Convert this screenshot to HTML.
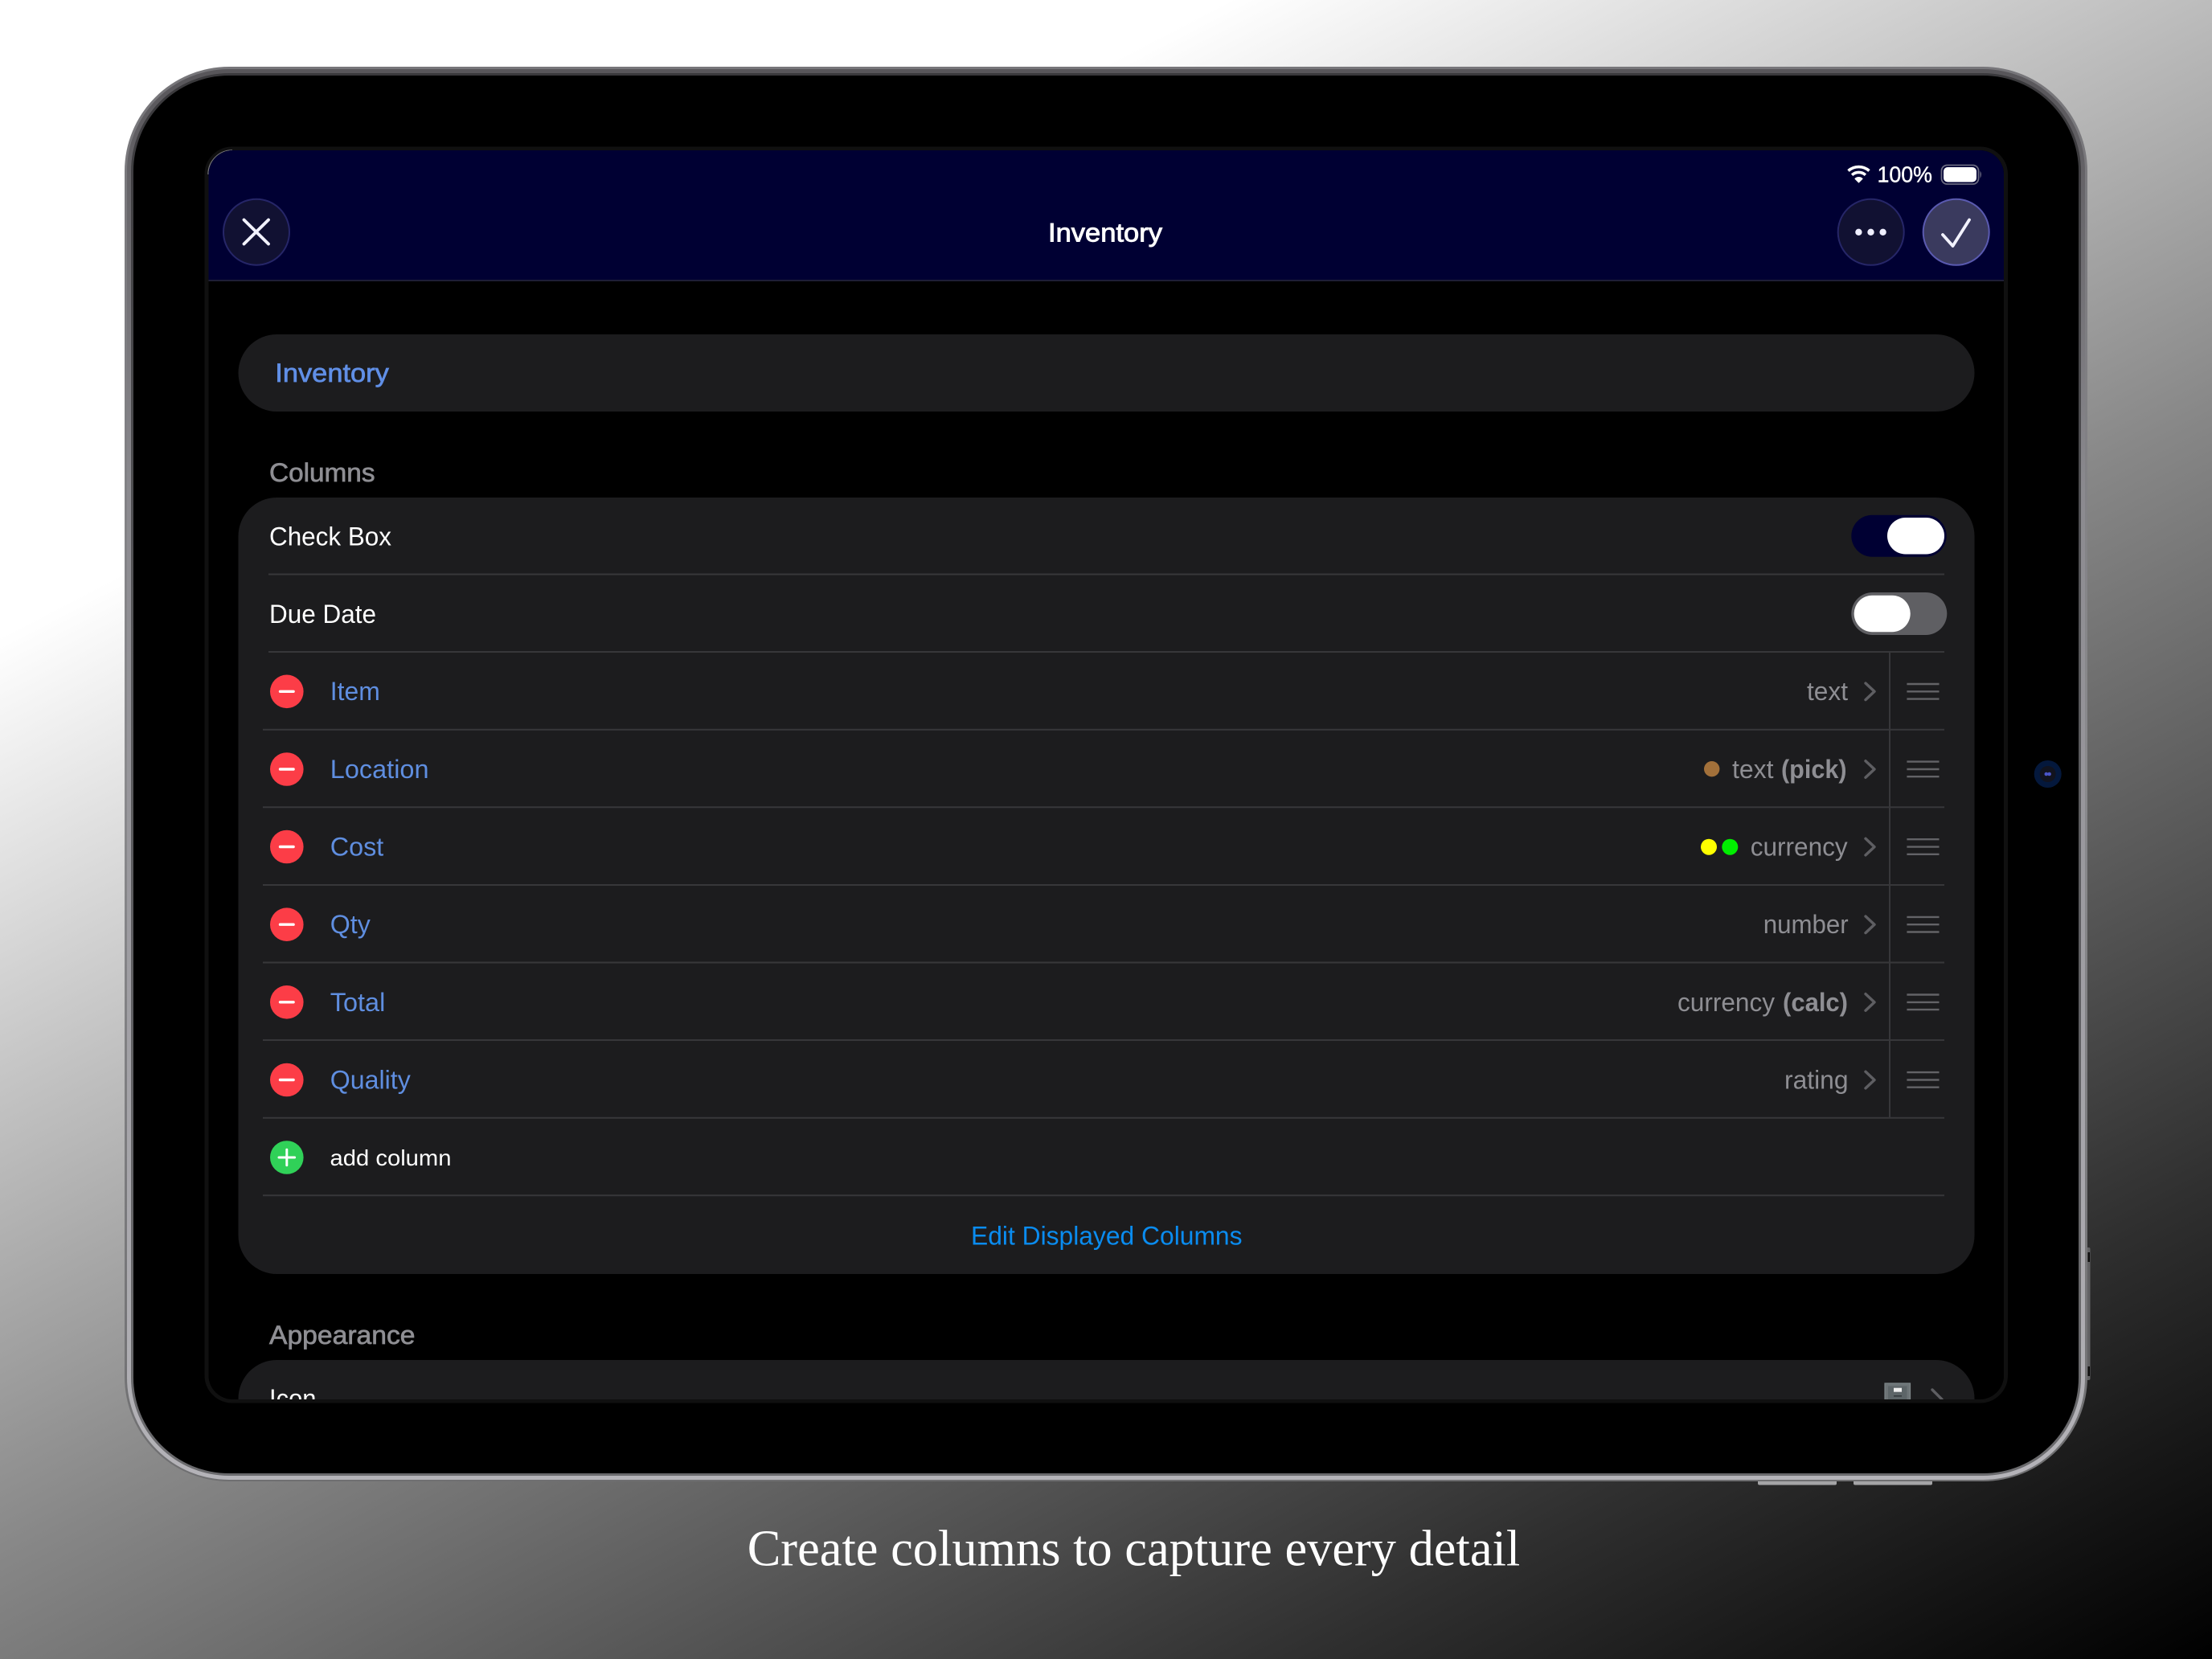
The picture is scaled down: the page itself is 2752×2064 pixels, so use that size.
<!DOCTYPE html>
<html lang="en">
<head>
<meta charset="utf-8">
<title>Inventory</title>
<style>
html,body{margin:0;padding:0;background:#000;width:2752px;height:2064px;overflow:hidden}
svg{display:block}
text{font-family:"Liberation Sans",sans-serif;font-size:32px;white-space:pre}
.w{fill:#fff}
.b{fill:#608fe6}
.g{fill:#8e8e93}
.m{stroke-width:.7px}
.bl{fill:#5f8ee0}
.sep{stroke:#37373a;stroke-width:2}
.chev{fill:none;stroke:#5e5e62;stroke-width:3.4;stroke-linecap:round;stroke-linejoin:round}
.hnd{stroke:#636367;stroke-width:2.4}
</style>
</head>
<body>
<svg width="2752" height="2064" viewBox="0 0 2752 2064" xmlns="http://www.w3.org/2000/svg">
<defs>
<linearGradient id="bg" gradientUnits="userSpaceOnUse" x1="323" y1="625" x2="1423" y2="2749">
<stop offset="0" stop-color="#ffffff"/>
<stop offset=".229" stop-color="#bebebe"/>
<stop offset=".425" stop-color="#878787"/>
<stop offset=".784" stop-color="#2f2f2f"/>
<stop offset="1" stop-color="#000000"/>
</linearGradient>
<linearGradient id="f1" x1="0" y1="0" x2="0" y2="1">
<stop offset="0" stop-color="#77767a"/>
<stop offset=".5" stop-color="#8a8a8d"/>
<stop offset="1" stop-color="#6f6f71"/>
</linearGradient>
<linearGradient id="f2" x1="0" y1="0" x2="0" y2="1">
<stop offset="0" stop-color="#58565a"/>
<stop offset=".3" stop-color="#8b8a8f"/>
<stop offset="1" stop-color="#b4b3b8"/>
</linearGradient>
<linearGradient id="f3" x1="0" y1="0" x2="0" y2="1">
<stop offset="0" stop-color="#3a393c"/>
<stop offset=".4" stop-color="#555558"/>
<stop offset="1" stop-color="#6a6a6d"/>
</linearGradient>
<clipPath id="scr"><rect x="259.5" y="187" width="2233.5" height="1554" rx="30"/></clipPath>
</defs>

<rect width="2752" height="2064" fill="url(#bg)"/>

<!-- side / bottom buttons -->
<rect x="2592" y="1552" width="8.5" height="165" rx="2" fill="#626264"/>
<rect x="2597.5" y="1558" width="2.5" height="12" fill="#0d0d0d"/>
<rect x="2597.5" y="1700" width="2.5" height="12" fill="#0d0d0d"/>
<rect x="2187" y="1840" width="98" height="7.5" rx="2" fill="#a4a4a6"/>
<rect x="2306" y="1840" width="98" height="7.5" rx="2" fill="#a4a4a6"/>

<!-- device frame -->
<rect x="155" y="83" width="2442" height="1760" rx="130" fill="url(#f1)"/>
<rect x="158" y="86" width="2436" height="1755" rx="127" fill="url(#f2)"/>
<rect x="163" y="91" width="2426" height="1745" rx="122" fill="url(#f3)"/>
<rect x="166" y="94" width="2420" height="1739" rx="119" fill="#000"/>

<!-- camera -->
<circle cx="2547.7" cy="963" r="17" fill="#04183c"/>
<circle cx="2547.7" cy="963" r="10" fill="#11131f"/>
<circle cx="2545.8" cy="963" r="2.3" fill="#4a55c8"/>
<circle cx="2549.6" cy="963" r="2.3" fill="#4a55c8"/>

<!-- screen border -->
<rect x="257" y="185" width="2238.5" height="1558" rx="32" fill="#000" stroke="#101010" stroke-width="5"/>
<path d="M259 217A30 30 0 0 1 289 187" fill="none" stroke="#77777a" stroke-width="1.4"/>

<g clip-path="url(#scr)">
<rect x="259" y="187" width="2235" height="1554" fill="#000"/>
<!-- nav -->
<rect x="259" y="187" width="2235" height="162" fill="#000033"/>
<rect x="259" y="348" width="2235" height="2" fill="#1e1e36"/>

<!-- status -->
<path d="M2312.5 227L2307.9 222.4A6.5 6.5 0 0 1 2317.1 222.4Z" fill="#fff" stroke="#fff" stroke-width="1" stroke-linejoin="round"/>
<path d="M2304.1 217.7A12.5 12.5 0 0 1 2320.9 217.7" fill="none" stroke="#fff" stroke-width="3.6"/>
<path d="M2299.5 212.5A19.5 19.5 0 0 1 2325.5 212.5" fill="none" stroke="#fff" stroke-width="3.6"/>
<text x="2335.5" y="226.5" class="w" style="font-size:28px;stroke:#fff;stroke-width:.4px" textLength="68.5" lengthAdjust="spacingAndGlyphs">100%</text>
<rect x="2415.5" y="205.5" width="46" height="23.5" rx="7" fill="none" stroke="#6a6a80" stroke-width="1.8"/>
<rect x="2418" y="208" width="41" height="18.5" rx="5" fill="#fff"/>
<path d="M2463.5 212.5Q2466.5 217 2463.5 222Z" fill="#6a6a80"/>

<!-- close -->
<circle cx="319" cy="288.7" r="41" fill="#111132" stroke="#262668" stroke-width="2"/>
<path d="M303.5 273.5L334 303.5M334 273.5L303.5 303.5" stroke="#f2f2ff" stroke-width="3.8" stroke-linecap="round" fill="none"/>

<!-- title -->
<text x="1304" y="300.5" class="w" style="stroke:#fff;stroke-width:.9px" textLength="142" lengthAdjust="spacingAndGlyphs">Inventory</text>

<!-- more -->
<circle cx="2327.7" cy="288.8" r="41" fill="#111132" stroke="#262668" stroke-width="2"/>
<circle cx="2312.4" cy="288.8" r="4.2" fill="#eeeeff"/>
<circle cx="2327.5" cy="288.8" r="4.2" fill="#eeeeff"/>
<circle cx="2342.6" cy="288.8" r="4.2" fill="#eeeeff"/>

<!-- done -->
<circle cx="2433.7" cy="288.8" r="41" fill="#3a3a5e" stroke="#5a5ab0" stroke-width="2"/>
<path d="M2417 292L2429.5 306L2450 273.5" stroke="#f2f2ff" stroke-width="3.8" stroke-linecap="round" stroke-linejoin="round" fill="none"/>

<!-- name field -->
<rect x="296.5" y="416" width="2160" height="96" rx="48" fill="#1c1c1e"/>
<text x="342.3" y="475" class="b m" style="stroke:#608fe6" textLength="141.5" lengthAdjust="spacingAndGlyphs">Inventory</text>

<text x="335" y="599" class="g m" style="stroke:#8e8e93" textLength="131.5" lengthAdjust="spacingAndGlyphs">Columns</text>

<!-- columns card -->
<rect x="296.5" y="619" width="2160" height="966" rx="48" fill="#1c1c1e"/>

<text x="335" y="678.5" class="w" textLength="152" lengthAdjust="spacingAndGlyphs">Check Box</text>
<rect x="2303.3" y="640.7" width="118.4" height="52" rx="26" fill="#000033"/>
<rect x="2348" y="644" width="71" height="45.5" rx="22.7" fill="#fff"/>

<text x="335" y="775" class="w" textLength="133" lengthAdjust="spacingAndGlyphs">Due Date</text>
<rect x="2303.3" y="737" width="119" height="53" rx="26.5" fill="#5f5f63"/>
<rect x="2306.7" y="740.7" width="70" height="45.5" rx="22.7" fill="#fff"/>

<!-- separators -->
<path class="sep" d="M334 714.5H2419M334 811H2419"/>
<path class="sep" d="M327 907.7H2419M327 1004.3H2419M327 1101H2419M327 1197.5H2419M327 1294H2419M327 1390.7H2419M327 1487.3H2419"/>
<path class="sep" d="M2351 811V1391"/>

<!-- row icons -->
<g fill="#fc3d47">
<circle cx="356.8" cy="860.3" r="20.8"/><circle cx="356.8" cy="957" r="20.8"/><circle cx="356.8" cy="1053.5" r="20.8"/><circle cx="356.8" cy="1150.2" r="20.8"/><circle cx="356.8" cy="1246.8" r="20.8"/><circle cx="356.8" cy="1343.5" r="20.8"/>
</g>
<g fill="#fff">
<rect x="346.8" y="858.6" width="20" height="3.4" rx="1.7"/><rect x="346.8" y="955.3" width="20" height="3.4" rx="1.7"/><rect x="346.8" y="1051.8" width="20" height="3.4" rx="1.7"/><rect x="346.8" y="1148.5" width="20" height="3.4" rx="1.7"/><rect x="346.8" y="1245.1" width="20" height="3.4" rx="1.7"/><rect x="346.8" y="1341.8" width="20" height="3.4" rx="1.7"/>
</g>
<circle cx="356.8" cy="1440" r="20.8" fill="#30d158"/>
<path d="M347 1440H366.6M356.8 1430.2V1449.8" stroke="#fff" stroke-width="3" stroke-linecap="round"/>

<!-- row names -->
<text x="410.8" y="871" class="bl" textLength="62" lengthAdjust="spacingAndGlyphs">Item</text>
<text x="410.8" y="968" class="bl" textLength="122.7" lengthAdjust="spacingAndGlyphs">Location</text>
<text x="410.8" y="1064.5" class="bl" textLength="66.5" lengthAdjust="spacingAndGlyphs">Cost</text>
<text x="410.8" y="1161" class="bl" textLength="50" lengthAdjust="spacingAndGlyphs">Qty</text>
<text x="410.8" y="1258" class="bl" textLength="68.5" lengthAdjust="spacingAndGlyphs">Total</text>
<text x="410.8" y="1354.5" class="bl" textLength="100" lengthAdjust="spacingAndGlyphs">Quality</text>
<text x="410.5" y="1450" class="w" style="font-size:28px" textLength="151" lengthAdjust="spacingAndGlyphs">add column</text>

<!-- row types -->
<text x="2248" y="871" class="g" textLength="51" lengthAdjust="spacingAndGlyphs">text</text>
<circle cx="2129.7" cy="956.7" r="9.7" fill="#a2703a"/>
<text x="2155" y="968" class="g" textLength="51.5" lengthAdjust="spacingAndGlyphs">text</text>
<text x="2216" y="968" class="g" style="font-weight:700" textLength="81.5" lengthAdjust="spacingAndGlyphs">(pick)</text>
<circle cx="2126" cy="1053.7" r="10" fill="#ffff00"/>
<circle cx="2152.3" cy="1053.7" r="10" fill="#00ee00"/>
<text x="2177.7" y="1064.5" class="g" textLength="121" lengthAdjust="spacingAndGlyphs">currency</text>
<text x="2193.7" y="1161" class="g" textLength="106" lengthAdjust="spacingAndGlyphs">number</text>
<text x="2087" y="1258" class="g" textLength="121" lengthAdjust="spacingAndGlyphs">currency</text>
<text x="2218" y="1258" class="g" style="font-weight:700" textLength="81" lengthAdjust="spacingAndGlyphs">(calc)</text>
<text x="2220" y="1354.5" class="g" textLength="79.5" lengthAdjust="spacingAndGlyphs">rating</text>

<!-- chevrons -->
<path class="chev" d="M2321 850L2332 860.3L2321 870.6M2321 946.7L2332 957L2321 967.3M2321 1043.3L2332 1053.6L2321 1063.9M2321 1140L2332 1150.3L2321 1160.6M2321 1236.6L2332 1246.9L2321 1257.2M2321 1333.3L2332 1343.6L2321 1353.9"/>

<!-- handles -->
<path class="hnd" d="M2372.4 851H2412.5M2372.4 860.3H2412.5M2372.4 869.6H2412.5M2372.4 947.6H2412.5M2372.4 957H2412.5M2372.4 966.2H2412.5M2372.4 1044.2H2412.5M2372.4 1053.6H2412.5M2372.4 1062.8H2412.5M2372.4 1140.9H2412.5M2372.4 1150.2H2412.5M2372.4 1159.5H2412.5M2372.4 1237.5H2412.5M2372.4 1246.9H2412.5M2372.4 1256.1H2412.5M2372.4 1334.1H2412.5M2372.4 1343.5H2412.5M2372.4 1352.7H2412.5"/>

<text x="1208" y="1548.3" fill="#0a8cf0" textLength="337.5" lengthAdjust="spacingAndGlyphs">Edit Displayed Columns</text>

<!-- appearance -->
<text x="335" y="1672" class="g m" style="stroke:#8e8e93" textLength="181.5" lengthAdjust="spacingAndGlyphs">Appearance</text>
<rect x="296.5" y="1692" width="2160" height="200" rx="48" fill="#1c1c1e"/>
<text x="335" y="1751" class="w" textLength="58.5" lengthAdjust="spacingAndGlyphs">Icon</text>
<rect x="2345" y="1721" width="31.5" height="30" fill="#6d7477" stroke="#7d8588" stroke-width="1.2"/>
<rect x="2349" y="1724.5" width="23.5" height="26" fill="#5d6568"/>
<rect x="2356" y="1726.7" width="10" height="5" fill="#eeeeee"/>
<rect x="2356" y="1736" width="10" height="1.6" fill="#333a3d"/>
<path d="M2404 1729L2416 1741" stroke="#5e5e62" stroke-width="3.4" stroke-linecap="round"/>
</g>

<!-- caption -->
<text x="929.7" y="1947.5" fill="#fff" style="font-family:'Liberation Serif',serif;font-size:64px" textLength="961.5" lengthAdjust="spacingAndGlyphs">Create columns to capture every detail</text>
</svg>
</body>
</html>
